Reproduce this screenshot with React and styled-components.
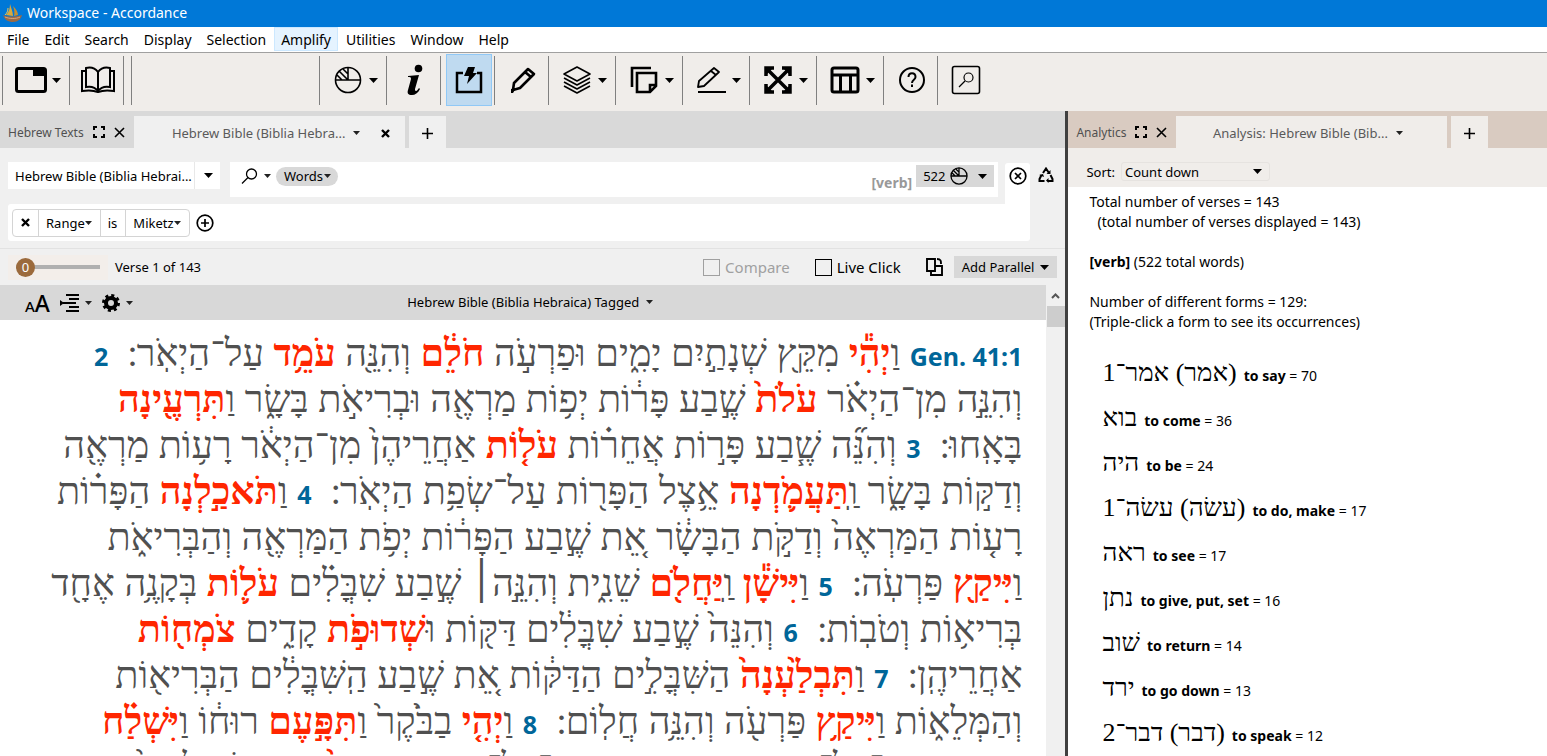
import * as React from "react";
import styled, { createGlobalStyle, css } from "styled-components";

const menus = [
  "File",
  "Edit",
  "Search",
  "Display",
  "Selection",
  "Amplify",
  "Utilities",
  "Window",
  "Help",
];

// "#" marks a verse reference, "*" marks a hit of the search
const passage = [
  ["#Gen. 41:1", " וַ", "*יְהִ֕י", " מִקֵּ֖ץ שְׁנָתַ֣יִם יָמִ֑ים וּפַרְעֹ֣ה ", "*חֹלֵ֔ם", " וְהִנֵּ֖ה ", "*עֹמֵ֥ד", " עַל־הַיְאֹֽר ׃\u00a0 ", "#2"],
  ["וְהִנֵּ֣ה מִן־הַיְאֹ֗ר ", "*עֹלֹת֙", " שֶׁ֣בַע פָּר֔וֹת יְפ֥וֹת מַרְאֶ֖ה וּבְרִיאֹ֣ת בָּשָׂ֑ר וַ", "*תִּרְעֶ֖ינָה"],
  ["בָּאָֽחוּ ׃\u00a0 ", "#3", " וְהִנֵּ֞ה שֶׁ֧בַע פָּר֣וֹת אֲחֵר֗וֹת ", "*עֹל֤וֹת", " אַחֲרֵיהֶן֙ מִן־הַיְאֹ֔ר רָע֥וֹת מַרְאֶ֖ה"],
  ["וְדַקּ֣וֹת בָּשָׂ֑ר וַֽ", "*תַּעֲמֹ֛דְנָה", " אֵ֥צֶל הַפָּר֖וֹת עַל־שְׂפַ֥ת הַיְאֹֽר ׃\u00a0 ", "#4", " וַ", "*תֹּאכַ֣לְנָה", " הַפָּר֗וֹת"],
  ["רָע֤וֹת הַמַּרְאֶה֙ וְדַקֹּ֣ת הַבָּשָׂ֔ר אֵ֚ת שֶׁ֣בַע הַפָּר֔וֹת יְפֹ֥ת הַמַּרְאֶ֖ה וְהַבְּרִיאֹ֑ת"],
  ["וַ", "*יִּיקַ֖ץ", " פַּרְעֹֽה ׃\u00a0 ", "#5", " וַ", "*יִּישָׁ֕ן", " וַֽ", "*יַּחֲלֹ֖ם", " שֵׁנִ֑ית וְהִנֵּ֣ה׀ שֶׁ֣בַע שִׁבֳּלִ֗ים ", "*עֹל֛וֹת", " בְּקָנֶ֥ה אֶחָ֖ד"],
  ["בְּרִיא֥וֹת וְטֹבֽוֹת ׃\u00a0 ", "#6", " וְהִנֵּה֙ שֶׁ֣בַע שִׁבֳּלִ֔ים דַּקּ֖וֹת וּ", "*שְׁדוּפֹ֣ת", " קָדִ֑ים ", "*צֹמְח֖וֹת"],
  ["אַחֲרֵיהֶֽן ׃\u00a0 ", "#7", " וַ", "*תִּבְלַ֙עְנָה֙", " הַשִּׁבֳּלִ֣ים הַדַּקּ֔וֹת אֵ֚ת שֶׁ֣בַע הַֽשִּׁבֳּלִ֔ים הַבְּרִיא֖וֹת"],
  ["וְהַמְּלֵא֑וֹת וַ", "*יִּיקַ֥ץ", " פַּרְעֹ֖ה וְהִנֵּ֥ה חֲלֽוֹם ׃\u00a0 ", "#8", " וַ", "*יְהִ֤י", " בַבֹּ֙קֶר֙ וַ", "*תִּפָּ֣עֶם", " רוּח֔וֹ וַ", "*יִּשְׁלַ֗ח"],
  ["וַ", "*יִּקְרָ֛א", " אֶת־כָּל־חַרְטֻמֵּ֥י מִצְרַ֖יִם וְאֶת־כָּל־חֲכָמֶ֑יהָ וַ", "*יְסַפֵּ֨ר", " פַּרְעֹ֤ה לָהֶם֙"],
];

const forms = [
  { word: "(אמר) אמר־1", gloss: "to say", count: 70 },
  { word: "בוא", gloss: "to come", count: 36 },
  { word: "היה", gloss: "to be", count: 24 },
  { word: "(עשׂה) עשׂה־1", gloss: "to do, make", count: 17 },
  { word: "ראה", gloss: "to see", count: 17 },
  { word: "נתן", gloss: "to give, put, set", count: 16 },
  { word: "שׁוב", gloss: "to return", count: 14 },
  { word: "ירד", gloss: "to go down", count: 13 },
  { word: "(דבר) דבר־2", gloss: "to speak", count: 12 },
];

const Svg = ({ w, h, children, ...rest }) => (
  <svg
    width={w}
    height={h}
    viewBox={`0 0 ${w} ${h}`}
    fill="none"
    stroke="#000"
    strokeWidth="2"
    aria-hidden="true"
    {...rest}
  >
    {children}
  </svg>
);

const Caret = ({ small }) =>
  small ? (
    <Svg w={7} h={4} stroke="none" fill="#222">
      <path d="M0 0h7L3.500 4z" />
    </Svg>
  ) : (
    <Svg w={9} h={5} stroke="none" fill="#000">
      <path d="M0 0h9L4.500 5z" />
    </Svg>
  );

const BoatLogo = () => (
  <Svg w={19} h={20} stroke="none">
    <path d="M7 1c1 4 3 8 3 12L3 12C6 9 7 5 7 1z" fill="#d9a93c" />
    <path d="M10 3c3 3 5 6 5 9l-4 1c1-4 0-7-1-10z" fill="#c58f2f" />
    <path d="M5 5c0 3-1 5-3 7" stroke="#e8c65c" strokeWidth="1" />
    <path d="M0 12c4 2 12 2 19 0-1 4-4 7-9 7S2 17 0 12z" fill="#9a6a45" />
    <path d="M2 14c5 2 11 2 15 0" stroke="#d3a47c" strokeWidth="1" />
  </Svg>
);

const WindowIcon = () => (
  <Svg w={32} h={28} strokeWidth="3">
    <rect x="1.500" y="2.500" width="29" height="23" rx="2" />
    <path d="M18 2h13v8H18z" fill="#000" stroke="none" />
  </Svg>
);

const BookIcon = () => (
  <Svg w={34} h={28}>
    <path d="M17 6C14 2 9 1 5 2v19c5-1 9 0 12 4 3-4 7-5 12-4V2c-4-1-9 0-12 4zM17 6v19" />
    <path d="M5 5H1v20c6-1 11-1 16 1 5-2 10-2 16-1V5h-4" />
  </Svg>
);

const PieIcon = ({ size = 28 }) => (
  <svg
    width={size}
    height={size}
    viewBox="0 0 28 28"
    fill="none"
    stroke="#000"
    strokeWidth={size > 20 ? 1.600 : 2}
    aria-hidden="true"
  >
    <circle cx="14" cy="14" r="12.500" />
    <path d="M1.500 14h25M14 1.500V14M9 3l5 5M5 5l9 9M3 9l5 5" />
  </svg>
);

const InfoIcon = () => (
  <Svg w={20} h={32} stroke="none" fill="#000">
    <circle cx="13.500" cy="4.500" r="3.800" />
    <path d="M3 12l11-1-4 14c0 1 0 2 1 2s2-2 3-3l1 1c-2 4-5 6-8 6-4 0-5-2-4-5l3-11c0-2-1-2-3-2z" />
  </Svg>
);

const BoltIcon = () => (
  <Svg w={28} h={30}>
    <path d="M8 8H2v19h24V8h-4" strokeWidth="2.500" />
    <path d="M13 2h7l-2 6h4L12 19l2-8H9z" fill="#000" stroke="none" />
  </Svg>
);

const PencilIcon = () => (
  <Svg w={27} h={28} strokeWidth="2.600">
    <path d="M3 24l1-7L18 3l6 5L10 22zM15 6l6 5" strokeLinejoin="round" />
    <path d="M1 23l5-1-3 5H1z" fill="#000" stroke="none" />
  </Svg>
);

const LayersIcon = () => (
  <Svg w={30} h={30} strokeWidth="1.600" strokeLinejoin="round">
    <path d="M15 2l13 7-13 7L2 9z" />
    <path d="M2 13l13 7 13-7M2 17l13 7 13-7M2 21l13 7 13-7" />
  </Svg>
);

const NotesIcon = () => (
  <Svg w={28} h={28} strokeWidth="2.600">
    <path d="M2 21V2h19" />
    <path d="M7 7h19v13l-6 6H7zM26 19h-6v7" />
  </Svg>
);

const MarkerIcon = () => (
  <Svg w={30} h={28} strokeWidth="1.800">
    <path d="M2 21l1-6L18 2l5 4L8 20zM15 5l5 4M2 26h28" strokeLinejoin="round" />
  </Svg>
);

const ExpandIcon = () => (
  <Svg w={28} h={28} strokeWidth="3.500">
    <path d="M4 4l20 20M24 4L4 24" />
    <path d="M2 10V2h8M18 2h8v8M26 18v8h-8M10 26H2v-8" />
    <path d="M1 1h9L1 10zM18 1h9v9zM27 18v9h-9zM10 27H1v-9z" fill="#000" stroke="none" />
  </Svg>
);

const TableIcon = () => (
  <Svg w={30} h={28} strokeWidth="3">
    <rect x="2" y="2" width="26" height="24" rx="2" />
    <path d="M2 9h26M10.500 9v17M20.500 9v17" />
  </Svg>
);

const HelpIcon = () => (
  <Svg w={28} h={28}>
    <circle cx="14" cy="14" r="12" />
    <path d="M10.500 11c0-5 7-5 7 0 0 3-3.500 2.500-3.500 6M14 18.500v2.500" />
  </Svg>
);

const BoxedSearchIcon = () => (
  <Svg w={30} h={30} strokeWidth="1.600">
    <rect x="1.500" y="1.500" width="27" height="27" rx="2" />
    <circle cx="17.500" cy="12.500" r="4.500" strokeWidth="1.200" />
    <path d="M14 16l-6 6" strokeWidth="1.200" />
  </Svg>
);

const ZoneIcon = () => (
  <Svg w={12} h={12}>
    <path d="M1 4V1h3M8 1h3v3M11 8v3H8M4 11H1V8" />
  </Svg>
);

const CloseIcon = ({ size = 11, bold }) => (
  <Svg w={size} h={size} strokeWidth={bold ? 2.400 : 1.600}>
    <path d={`M1 1L${size - 1} ${size - 1}M${size - 1} 1L1 ${size - 1}`} />
  </Svg>
);

const PlusIcon = () => (
  <Svg w={11} h={11} strokeWidth="1.600">
    <path d="M5.500 0v11M0 5.500h11" />
  </Svg>
);

const SearchIcon = () => (
  <Svg w={17} h={17} strokeWidth="1.300">
    <circle cx="10.500" cy="6" r="5" />
    <path d="M7 9.500l-6 6" />
  </Svg>
);

const CircledIcon = ({ d }) => (
  <Svg w={18} h={18} strokeWidth="1.700">
    <circle cx="9" cy="9" r="7.800" />
    <path d={d} />
  </Svg>
);

const RecycleIcon = () => (
  <Svg w={16} h={16} strokeWidth="2">
    <path d="M5 6l3-4.500L11 6M12.500 8l2 4v2H10M6.500 14h-5v-2l2-4" />
    <path d="M12.500 3v4h-4zM10.500 11v5L8 13.500zM1 8l4-1 1 3z" fill="#000" stroke="none" />
  </Svg>
);

const IndentIcon = () => (
  <Svg w={19} h={18}>
    <path d="M6 1h13M9 5h10M6 9h10M9 13h10M6 17h13M3 9h4" strokeWidth="1.800" />
    <path d="M0 6l4 3-4 3z" fill="#000" stroke="none" />
  </Svg>
);

const GearIcon = () => (
  <Svg w={18} h={18}>
    <circle cx="9" cy="9" r="5" strokeWidth="4" />
    <circle cx="9" cy="9" r="7.500" strokeWidth="3" strokeDasharray="3 2.890" />
  </Svg>
);

const CopyPaneIcon = () => (
  <Svg w={18} h={18} strokeWidth="1.900">
    <path d="M1 1h8v12H1zM9 8h7v9H5v-4M11 1c4 0 4 2 4 5" />
  </Svg>
);

const tools = [
  { key: "pie", label: "Analysis", Icon: PieIcon, drop: true },
  { key: "info", label: "Instant details", Icon: InfoIcon },
  { key: "amplify", label: "Amplify", Icon: BoltIcon, active: true },
  { key: "edit", label: "Edit", Icon: PencilIcon },
  { key: "layers", label: "Layers", Icon: LayersIcon, drop: true },
  { key: "notes", label: "Notes", Icon: NotesIcon, drop: true },
  { key: "highlight", label: "Highlight", Icon: MarkerIcon, drop: true },
  { key: "expand", label: "Zones", Icon: ExpandIcon, drop: true },
  { key: "layout", label: "Layout", Icon: TableIcon, drop: true },
  { key: "help", label: "Help", Icon: HelpIcon },
  { key: "find", label: "Find", Icon: BoxedSearchIcon },
];

const Tool = ({ label, Icon, drop, active }) => (
  <ToolSlot $drop={drop}>
    <ToolButton aria-label={label} $drop={drop} $active={active}>
      <IconBox>
        <Icon />
      </IconBox>
      {drop && <Caret />}
    </ToolButton>
  </ToolSlot>
);

const ZoneTabs = ({ name, title, closable, warm }) => (
  <TabStrip $warm={warm}>
    <ZoneName>
      {name}
      <PlainButton aria-label="Expand zone">
        <ZoneIcon />
      </PlainButton>
      <PlainButton aria-label="Close zone">
        <CloseIcon />
      </PlainButton>
    </ZoneName>
    <Tab $warm={warm} $closable={closable}>
      <TabTitle>
        {title}
        <Caret small />
      </TabTitle>
      {closable && (
        <PlainButton aria-label="Close tab">
          <CloseIcon size={9} bold />
        </PlainButton>
      )}
    </Tab>
    <AddTab $warm={warm} aria-label="Add tab">
      <PlusIcon />
    </AddTab>
  </TabStrip>
);

const Piece = ({ text }) => {
  if (text[0] === "#") return <VerseRef dir="ltr">{text.slice(1)}</VerseRef>;
  if (text[0] === "*") return <Hit>{text.slice(1)}</Hit>;
  return text;
};

export default function App() {
  return (
    <>
      <GlobalStyle />
      <Window>
        <TitleBar>
          <BoatLogo />
          Workspace - Accordance
        </TitleBar>
        <MenuBar>
          {menus.map((menu) => (
            <MenuItem key={menu} $active={menu === "Amplify"}>
              {menu}
            </MenuItem>
          ))}
        </MenuBar>
        <Toolbar>
          <Tool label="Workspace" Icon={WindowIcon} drop />
          <Tool label="Library" Icon={BookIcon} />
          <ToolGap />
          <ToolGap $wide />
          {tools.map(({ key, ...tool }) => (
            <Tool key={key} {...tool} />
          ))}
        </Toolbar>
        <Workspace>
          <TextZone>
            <ZoneTabs name="Hebrew Texts" title="Hebrew Bible (Biblia Hebra..." closable />
            <SearchArea>
              <SearchRow>
                <ModuleSelect>
                  <select aria-label="Search text">
                    <option>Hebrew Bible (Biblia Hebrai...</option>
                  </select>
                  <Caret />
                </ModuleSelect>
                <SearchBox>
                  <SearchMode aria-label="Search mode">
                    <SearchIcon />
                    <Caret small />
                  </SearchMode>
                  <WordsPill>
                    Words
                    <Caret small />
                  </WordsPill>
                  <SearchInput aria-label="Search for" defaultValue="[verb]" />
                  <HitCount>
                    522
                    <PieIcon size={18} />
                    <Caret />
                  </HitCount>
                </SearchBox>
                <ClearTab aria-label="Remove criteria">
                  <CircledIcon d="M6 6l6 6M12 6l-6 6" />
                </ClearTab>
                <PlainButton aria-label="Recycle">
                  <RecycleIcon />
                </PlainButton>
              </SearchRow>
              <CriteriaRow>
                <Criteria>
                  <CriteriaPart aria-label="Remove range">
                    <CloseIcon size={9} bold />
                  </CriteriaPart>
                  <CriteriaPart>
                    Range
                    <Caret small />
                  </CriteriaPart>
                  <CriteriaPart as="span">is</CriteriaPart>
                  <CriteriaPart>
                    Miketz
                    <Caret small />
                  </CriteriaPart>
                </Criteria>
                <PlainButton aria-label="Add criteria">
                  <CircledIcon d="M9 5v8M5 9h8" />
                </PlainButton>
              </CriteriaRow>
            </SearchArea>
            <ContextRow>
              <ContextSlider>
                <input id="context" type="range" min="0" max="50" defaultValue="0" aria-label="Context" />
                <output htmlFor="context">0</output>
              </ContextSlider>
              <VerseCount>Verse 1 of 143</VerseCount>
              <CheckLabel $disabled>
                <input type="checkbox" disabled />
                Compare
              </CheckLabel>
              <CheckLabel>
                <input type="checkbox" />
                Live Click
              </CheckLabel>
              <PlainButton aria-label="Detach pane">
                <CopyPaneIcon />
              </PlainButton>
              <ParallelButton>
                Add Parallel
                <Caret />
              </ParallelButton>
            </ContextRow>
            <Reader>
              <ReaderMain>
                <PaneHeader>
                  <PaneTools>
                    <PlainButton aria-label="Text size">
                      <TextSizeIcon>
                        A<b>A</b>
                      </TextSizeIcon>
                    </PlainButton>
                    <PlainButton aria-label="Indent">
                      <IndentIcon />
                      <Caret small />
                    </PlainButton>
                    <PlainButton aria-label="Settings">
                      <GearIcon />
                      <Caret small />
                    </PlainButton>
                  </PaneTools>
                  <PaneTitle>
                    Hebrew Bible (Biblia Hebraica) Tagged
                    <Caret small />
                  </PaneTitle>
                </PaneHeader>
                <Passage dir="rtl" lang="he">
                  {passage.map((line, i) => (
                    <Line key={i}>
                      {line.map((text, j) => (
                        <Piece key={j} text={text} />
                      ))}
                    </Line>
                  ))}
                </Passage>
              </ReaderMain>
              <ScrollBar>
                <Svg w={9} h={6}>
                  <path d="M1 5l3.500-3.500L8 5" stroke="#555" />
                </Svg>
                <ScrollThumb />
              </ScrollBar>
            </Reader>
          </TextZone>
          <Splitter />
          <AnalysisZone>
            <ZoneTabs name="Analytics" title="Analysis: Hebrew Bible (Bib..." warm />
            <SortRow>
              <label htmlFor="sort">Sort:</label>
              <SortSelect>
                <select id="sort">
                  <option>Count down</option>
                </select>
                <Caret />
              </SortSelect>
            </SortRow>
            <Report>
              <p>Total number of verses = 143</p>
              <Indented>(total number of verses displayed = 143)</Indented>
              <Paragraph>
                <b>[verb]</b> (522 total words)
              </Paragraph>
              <p>Number of different forms = 129:</p>
              <p>(Triple-click a form to see its occurrences)</p>
              <FormList>
                {forms.map(({ word, gloss, count }) => (
                  <FormItem key={word}>
                    <Lemma dir="rtl" lang="he">
                      {word}
                    </Lemma>
                    <span>
                      <b>{gloss}</b> = {count}
                    </span>
                  </FormItem>
                ))}
              </FormList>
            </Report>
          </AnalysisZone>
        </Workspace>
      </Window>
    </>
  );
}

const GlobalStyle = createGlobalStyle`
  * {
    box-sizing: border-box;
  }
  body {
    margin: 0;
    font-family: "Noto Sans", "Open Sans", sans-serif;
    font-size: 14px;
    color: #000;
  }
  p, ul {
    margin: 0;
    padding: 0;
  }
  button, select, input {
    font: inherit;
    color: inherit;
    border: 0;
    padding: 0;
    background: none;
  }
  svg {
    flex: none;
    display: block;
  }
`;

const Window = styled.div`
  display: flex;
  flex-direction: column;
  height: 100vh;
  overflow: hidden;
  background-color: #fff;
`;

const TitleBar = styled.header`
  display: flex;
  align-items: center;
  gap: 5px;
  flex: none;
  height: 27px;
  padding: 0 0 2px 3px;
  background-color: #0078d7;
  color: #fff;
`;

const MenuBar = styled.nav`
  display: flex;
  gap: 1px;
  flex: none;
  height: 26px;
  border-bottom: 1px solid #a0a0a0;
`;

const MenuItem = styled.button`
  height: 24px;
  padding: 0 6px;
  border: 1px solid ${({ $active }) => ($active ? "#cce8ff" : "transparent")};
  background-color: ${({ $active }) => ($active ? "#e5f3ff" : "transparent")};
`;

const Toolbar = styled.div`
  display: flex;
  align-items: center;
  flex: none;
  height: 58px;
  padding: 0 0 4px 2px;
  background-color: #f0edea;
`;

const ToolSlot = styled.div`
  display: flex;
  align-items: center;
  justify-content: center;
  flex: none;
  width: ${({ $drop }) => ($drop ? 67 : 54)}px;
  height: 49px;
  padding-left: 3px;
  border-left: 1px solid #808080;
`;

const ToolButton = styled.button`
  display: flex;
  align-items: center;
  justify-content: center;
  gap: 5px;
  flex: none;
  width: ${({ $drop }) => ($drop ? 60 : 46)}px;
  height: 52px;
  ${({ $active }) =>
    $active &&
    css`
      background-color: #bfdaf0;
      border: 1px solid #90c8f6;
    `}
`;

const IconBox = styled.span`
  display: flex;
  justify-content: center;
  width: 32px;
`;

const ToolGap = styled.div`
  width: ${({ $wide }) => ($wide ? 188 : 8)}px;
  height: 49px;
  border-left: 1px solid #808080;
`;

const Workspace = styled.main`
  display: flex;
  flex: 1;
  min-height: 0;
`;

const TextZone = styled.section`
  display: flex;
  flex-direction: column;
  flex: 1;
  min-width: 0;
`;

const Splitter = styled.div`
  flex: none;
  width: 3px;
  background-color: #404040;
`;

const AnalysisZone = styled.section`
  display: flex;
  flex-direction: column;
  flex: none;
  width: calc(31% - 1px);
`;

const TabStrip = styled.div`
  display: flex;
  align-items: flex-end;
  flex: none;
  height: 37px;
  background-color: ${({ $warm }) => ($warm ? "#d9cbc1" : "#d9d9d9")};
`;

const ZoneName = styled.div`
  display: flex;
  align-items: center;
  gap: 9px;
  height: 32px;
  padding: 0 9px 0 8px;
  font-size: 12px;
  color: #505050;
`;

const PlainButton = styled.button`
  display: flex;
  align-items: center;
  gap: 6px;
`;

const tabColor = css`
  background-color: ${({ $warm }) => ($warm ? "#f0edea" : "#f0f0f0")};
`;

const Tab = styled.div`
  display: flex;
  align-items: center;
  justify-content: center;
  gap: 21px;
  width: 271px;
  height: 32px;
  padding: ${({ $closable }) => ($closable ? "2px 0 0 24px" : "2px 8px 0 0")};
  color: #5a5a5a;
  ${tabColor}
`;

const TabTitle = styled.button`
  display: flex;
  align-items: center;
  gap: 8px;
  font-size: 13px;
`;

const AddTab = styled.button`
  display: flex;
  align-items: center;
  justify-content: center;
  width: 37px;
  height: 32px;
  margin-left: 4px;
  padding-top: 2px;
  ${tabColor}
`;

const SearchArea = styled.div`
  flex: none;
  padding: 14px 0 7px 8px;
  background-color: #f0f0f0;
  border-bottom: 1px solid #e2e2e2;
  font-size: 13px;
`;

const SearchRow = styled.div`
  display: flex;
  padding-right: 11px;
`;

const ModuleSelect = styled.div`
  display: flex;
  align-items: center;
  width: 212px;
  height: 27px;
  margin-right: 10px;
  padding-right: 7px;
  background-color: #fff;
  select {
    flex: 1;
    min-width: 0;
    height: 27px;
    margin-right: 9px;
    padding-left: 7px;
    border-right: 1px solid #e8e8e8;
    appearance: none;
  }
`;

const SearchBox = styled.div`
  display: flex;
  align-items: flex-start;
  flex: 1;
  min-width: 0;
  height: 35px;
  padding: 3px 4px 0 11px;
  background-color: #fff;
`;

const SearchMode = styled(PlainButton)`
  height: 22px;
`;

const WordsPill = styled.button`
  display: flex;
  align-items: center;
  gap: 1px;
  height: 19px;
  margin: 2px 0 0 5px;
  padding: 0 7px 2px 8px;
  border-radius: 10px;
  background-color: #d8d8d8;
`;

const SearchInput = styled.input`
  flex: 1;
  min-width: 0;
  height: 32px;
  padding: 3px 4px 0 0;
  text-align: right;
  font-size: 14px;
  font-weight: bold;
  color: #999;
`;

const HitCount = styled.button`
  display: flex;
  align-items: center;
  gap: 5px;
  height: 22px;
  padding: 0 7px;
  background-color: #d8d8d8;
  svg:last-child {
    margin-left: 5px;
  }
`;

const ClearTab = styled.button`
  display: flex;
  justify-content: center;
  width: 25px;
  height: 41px;
  margin: 1px 8px 0 7px;
  padding-top: 4px;
  border-radius: 3px 3px 0 0;
  background-color: #fff;
  & + button {
    height: 26px;
  }
`;

const CriteriaRow = styled.div`
  display: flex;
  align-items: center;
  gap: 6px;
  height: 37px;
  margin-right: 35px;
  padding-left: 4px;
  border-radius: 3px 0 3px 3px;
  background-color: #fff;
`;

const Criteria = styled.div`
  display: flex;
  height: 28px;
  border: 1px solid #d4d4d4;
  border-radius: 4px;
`;

const CriteriaPart = styled.button`
  display: flex;
  align-items: center;
  padding: 0 8px;
  & + & {
    padding: 0 8px 0 7px;
    border-left: 1px solid #d4d4d4;
  }
`;

const ContextRow = styled.div`
  display: flex;
  align-items: center;
  flex: none;
  height: 36px;
  padding: 0 8px;
  background-color: #f0f0f0;
  font-size: 13px;
`;

const ContextSlider = styled.div`
  position: relative;
  display: flex;
  align-items: center;
  width: 100px;
  height: 25px;
  padding: 0 8px;
  background-color: #f3eeea;
  input {
    width: 100%;
    height: 20px;
    margin: 0;
    appearance: none;
    background: linear-gradient(#b0b0b0, #b0b0b0) center / 100% 4px no-repeat;
  }
  input::-webkit-slider-thumb {
    appearance: none;
    width: 19px;
    height: 19px;
    border-radius: 50%;
    background-color: #9b6a3c;
  }
  output {
    position: absolute;
    left: 8px;
    width: 19px;
    text-align: center;
    color: #fff;
    pointer-events: none;
  }
`;

const VerseCount = styled.span`
  flex: 1;
  padding-left: 7px;
`;

const CheckLabel = styled.label`
  display: flex;
  align-items: center;
  gap: 5px;
  margin-right: 25px;
  font-size: 15px;
  color: ${({ $disabled }) => ($disabled ? "#a0a0a0" : "#000")};
  input {
    width: 17px;
    height: 17px;
    margin: 0;
    border: 1px solid currentColor;
    appearance: none;
  }
`;

const ParallelButton = styled.button`
  display: flex;
  align-items: center;
  gap: 6px;
  height: 22px;
  margin-left: 10px;
  padding: 0 8px;
  background-color: #d8d8d8;
`;

const Reader = styled.div`
  display: flex;
  flex: 1;
  min-height: 0;
`;

const ReaderMain = styled.div`
  display: flex;
  flex-direction: column;
  flex: 1;
  min-width: 0;
`;

const PaneHeader = styled.div`
  display: grid;
  grid-template-columns: 1fr auto 1fr;
  align-items: center;
  flex: none;
  height: 35px;
  background-color: #d8d8d8;
  font-size: 13px;
`;

const PaneTools = styled.div`
  display: flex;
  align-items: center;
  gap: 10px;
  padding-left: 25px;
`;

const TextSizeIcon = styled.span`
  font-size: 15px;
  font-weight: 500;
  b {
    font-size: 23px;
    font-weight: 500;
  }
`;

const PaneTitle = styled.button`
  display: flex;
  align-items: center;
  gap: 7px;
  padding: 0 0 2px 14px;
`;

const Passage = styled.div`
  flex: 1;
  min-height: 0;
  overflow: hidden;
  padding: 10px 24px 0 0;
  font-family: "Liberation Serif", serif;
  font-size: 38px;
  color: #505050;
`;

const Line = styled.p`
  height: 46px;
  line-height: 46px;
  white-space: nowrap;
`;

const Hit = styled.span`
  color: #ff2600;
  font-weight: bold;
`;

const VerseRef = styled.bdi`
  font-family: "Noto Sans", "Open Sans", sans-serif;
  font-size: 25px;
  font-weight: bold;
  color: #006699;
`;

const ScrollBar = styled.div`
  display: flex;
  flex-direction: column;
  align-items: center;
  width: 19px;
  padding-top: 8px;
  background-color: #f0f0f0;
`;

const ScrollThumb = styled.div`
  width: 18px;
  height: 21px;
  margin-top: 7px;
  background-color: #cdcdcd;
`;

const SortRow = styled.div`
  display: flex;
  align-items: center;
  gap: 6px;
  flex: none;
  height: 39px;
  padding: 8px 18px 0;
  background-color: #f0edea;
  font-size: 13px;
`;

const SortSelect = styled.div`
  display: flex;
  align-items: center;
  width: 149px;
  height: 19px;
  padding-right: 7px;
  border: 1px solid #e6e3e0;
  border-radius: 3px;
  select {
    flex: 1;
    padding-left: 3px;
    appearance: none;
  }
`;

const Report = styled.div`
  flex: 1;
  min-height: 0;
  overflow: hidden;
  padding: 5px 21px;
  line-height: 20px;
`;

const Indented = styled.p`
  padding-left: 8px;
`;

const Paragraph = styled.p`
  margin: 20px 0;
`;

const FormList = styled.ul`
  margin-top: 18px;
  padding-left: 13px;
  list-style: none;
`;

const FormItem = styled.li`
  display: flex;
  align-items: baseline;
  gap: 7px;
  height: 45px;
`;

const Lemma = styled.bdi`
  font-family: "Liberation Serif", serif;
  font-size: 26px;
  line-height: 45px;
`;
